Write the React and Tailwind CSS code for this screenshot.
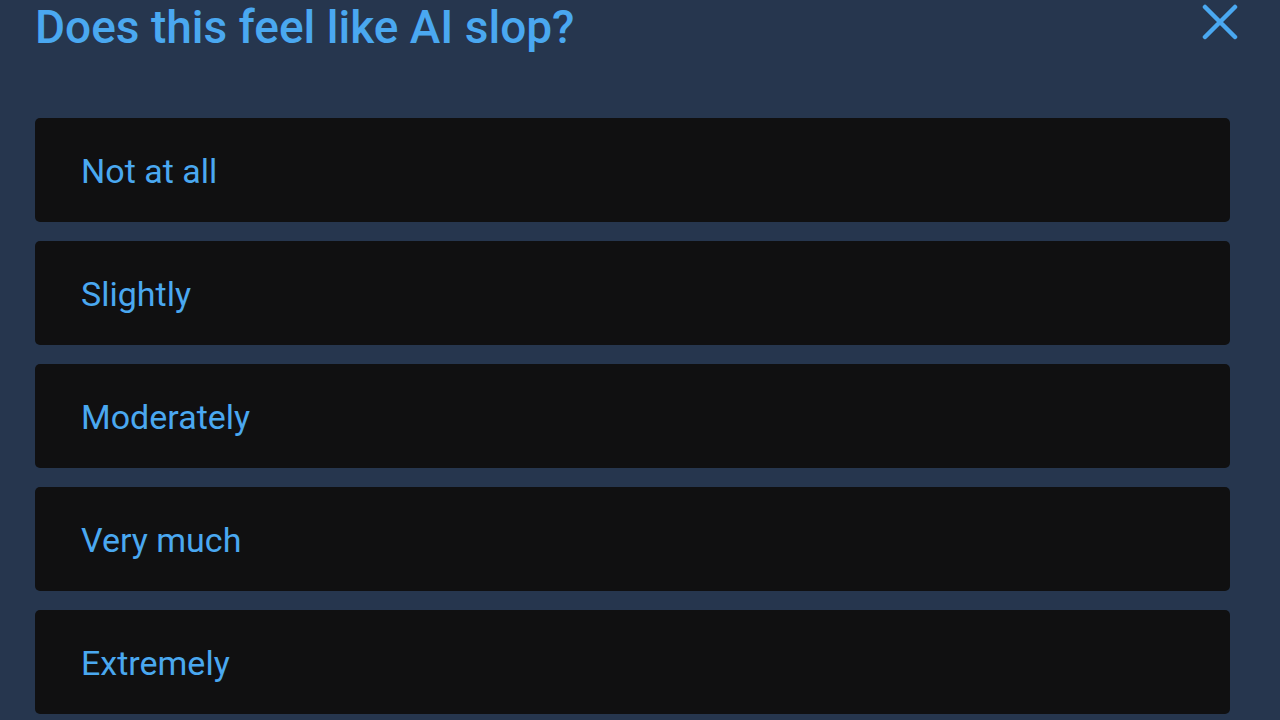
import React from "react";

const options = ["Not at all", "Slightly", "Moderately", "Very much", "Extremely"];

export default function App() {
  return (
    <div
      className="w-[1280px] h-[720px] overflow-hidden bg-[#26364e] text-[#4aa8f0]"
      style={{ fontFamily: "Roboto, 'Noto Sans', sans-serif" }}
    >
      <div className="flex items-start justify-between pl-[35px] pr-[42px]">
        <h1 className="text-[46px] leading-[52px] font-medium mt-[1px]">
          Does this feel like AI slop?
        </h1>
        <button className="mt-[4px]" aria-label="Close">
          <svg width="36" height="36" viewBox="0 0 36 36" fill="none">
            <path
              d="M3 3L33 33M33 3L3 33"
              stroke="#4aa8f0"
              strokeWidth="4.5"
              strokeLinecap="round"
            />
          </svg>
        </button>
      </div>

      <div className="mt-[65px] pl-[35px] pr-[50px] flex flex-col gap-[19px]">
        {options.map((opt) => (
          <button
            key={opt}
            className="h-[104px] w-full rounded-[5px] bg-[#101011] flex items-center pl-[46px] pt-[3px] text-left text-[34px]"
          >
            {opt}
          </button>
        ))}
      </div>
    </div>
  );
}
